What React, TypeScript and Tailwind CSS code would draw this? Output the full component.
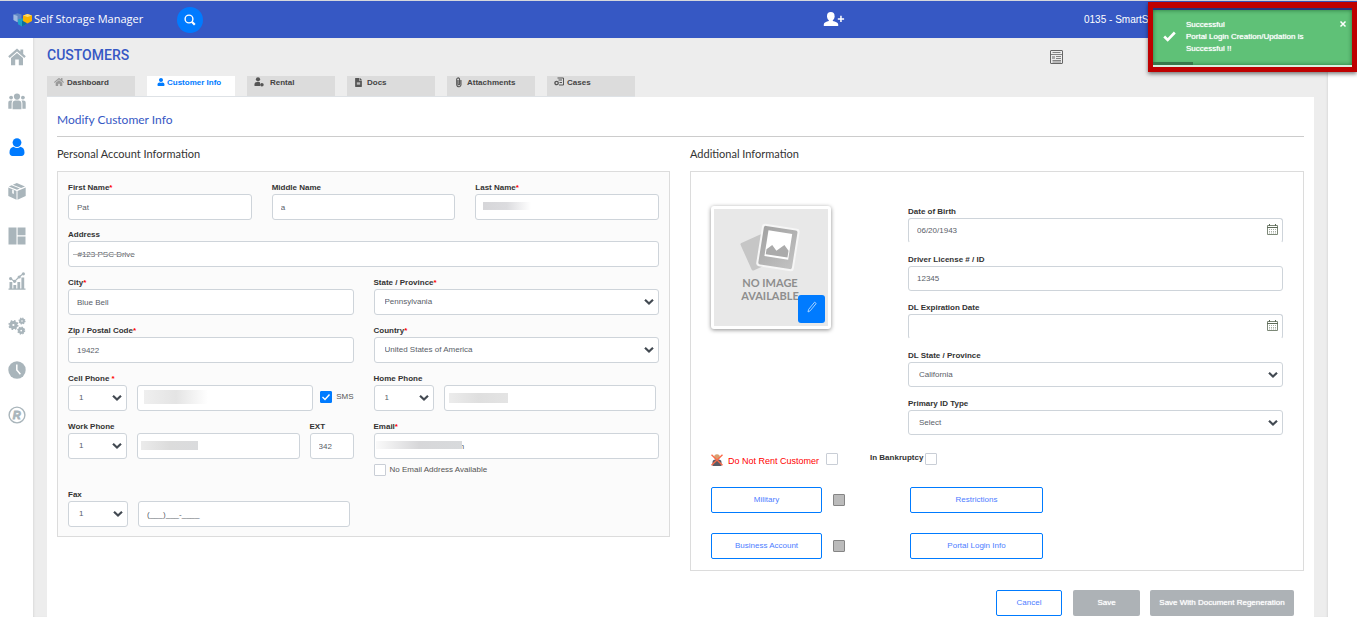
import type { ReactNode } from "react";
import { FaPaperclip, FaFileAlt, FaHome, FaUser } from "react-icons/fa";

const controlBase =
  "w-full min-w-0 rounded-[3px] border border-[#ced4da] bg-white text-[8px] leading-3 text-[#596068] outline-none";

function Star() {
  return <span className="text-[#ff0000]">*</span>;
}

function Field({
  id,
  label,
  required,
  className = "",
  children,
}: {
  id: string;
  label: string;
  required?: boolean;
  className?: string;
  children: ReactNode;
}) {
  return (
    <div className={"flex min-w-0 flex-col " + className}>
      <label htmlFor={id} className="block h-3.5 whitespace-nowrap text-[8px] leading-4 font-bold text-[#333]">
        {label}
        {required && <Star />}
      </label>
      {children}
    </div>
  );
}

function TextBox({
  id,
  value = "",
  label,
  className = "",
  size = "h-[26px]",
  mask,
}: {
  id: string;
  value?: string;
  label?: string;
  className?: string;
  size?: string;
  mask?: string;
}) {
  return (
    <div className="relative min-w-0 grow">
      <input
        id={id}
        type="text"
        aria-label={label}
        defaultValue={value}
        className={controlBase + " block " + size + " " + (className || "px-2")}
      />
      {mask && <span className={"pointer-events-none absolute " + mask} />}
    </div>
  );
}

function SelectBox({
  id,
  options,
  label,
  size = "h-[26px]",
  className = "grow",
}: {
  id: string;
  options: string[];
  label?: string;
  size?: string;
  className?: string;
}) {
  return (
    <div className={"relative min-w-0 " + className}>
      <select id={id} aria-label={label} className={controlBase + " block appearance-none pr-5 pl-2.5 " + size}>
        {options.map((o) => (
          <option key={o}>{o}</option>
        ))}
      </select>
      <svg
        viewBox="0 0 10 7"
        className="pointer-events-none absolute top-1/2 right-[5px] h-[7px] w-2.5 -translate-y-1/2"
        fill="none"
        stroke="#434a52"
        strokeWidth="2.2"
      >
        <path d="M1 1.2 L5 5 L9 1.2" />
      </svg>
    </div>
  );
}

function DateBox({ id, value = "" }: { id: string; value?: string }) {
  return (
    <div className="relative">
      <input
        id={id}
        type="text"
        defaultValue={value}
        className={controlBase + " block h-[25px] border-b-transparent pr-6 pl-2"}
      />
      <svg viewBox="0 0 11 11" className="absolute top-1.5 right-[5px] h-[11px] w-[11px]" fill="none">
        <path d="M0.5 1.5H10.5V10.5H0.5Z" stroke="#7c8877" />
        <path d="M0 3.5H11M2.5 0V2M8.5 0V2" stroke="#5d6a58" />
        <path d="M2 5.5H9M2 7.5H9M2 9H9" stroke="#a8b0a5" strokeDasharray="1 1" />
      </svg>
    </div>
  );
}

function Tick({ id, checked, label }: { id: string; checked?: boolean; label?: string }) {
  return (
    <span className="relative block h-3 w-3 shrink-0">
      <input
        id={id}
        type="checkbox"
        aria-label={label}
        defaultChecked={checked}
        className="peer block h-3 w-3 appearance-none rounded-[1px] border border-[#c9ced6] bg-white checked:border-[#007bff] checked:bg-[#007bff]"
      />
      <svg
        viewBox="0 0 12 12"
        className="pointer-events-none absolute inset-0 hidden h-3 w-3 peer-checked:block"
        fill="none"
        stroke="#fff"
        strokeWidth="1.4"
      >
        <path d="M2.5 6L5 8.5L9.5 3.5" />
      </svg>
    </span>
  );
}

function GreyTick({ id, label }: { id: string; label: string }) {
  return (
    <input
      id={id}
      type="checkbox"
      aria-label={label}
      className="block h-3 w-3 shrink-0 appearance-none rounded-[1px] border border-[#858585] bg-[#bbb]"
    />
  );
}

function Gear({ x, y, r }: { x: number; y: number; r: number }) {
  const teeth = (2 * Math.PI * r) / 16;
  return (
    <g fill="none" stroke="#a9b5bb">
      <circle cx={x} cy={y} r={r * 0.65} strokeWidth={r * 0.75} />
      <circle cx={x} cy={y} r={r} strokeWidth={r * 0.55} strokeDasharray={teeth + " " + teeth} />
    </g>
  );
}

const HomeIcon = (
  <svg viewBox="0 0 18 18" className="h-[18px] w-[18px]" fill="#a9b5bb">
    <path d="M9 0.6L0.2 8.2L1.7 9.9L9 3.6L16.3 9.9L17.8 8.2L15.2 5.9V1.6H12.4V3.6Z" />
    <path d="M9 5L3 10.1V17.3H7.2V11.6H10.8V17.3H15V10.1Z" />
  </svg>
);
const GroupIcon = (
  <svg viewBox="0 0 18 18" className="h-[18px] w-[18px]" fill="#a9b5bb">
    <circle cx="9" cy="3.6" r="3.1" />
    <circle cx="3.1" cy="4.6" r="1.9" />
    <circle cx="14.9" cy="4.6" r="1.9" />
    <path d="M4.6 16.2V10.8C4.6 8.8 5.8 7.6 7.4 7.6H10.6C12.2 7.6 13.4 8.8 13.4 10.8V16.2Z" />
    <path d="M0.3 15.8V9.8C0.3 8.2 1.2 7.4 2.5 7.4H4.5C3.8 8.4 3.6 9.4 3.6 10.6V15.8Z" />
    <path d="M17.7 15.8V9.8C17.7 8.2 16.8 7.4 15.5 7.4H13.5C14.2 8.4 14.4 9.4 14.4 10.6V15.8Z" />
  </svg>
);
const PersonIcon = (
  <svg viewBox="0 0 18 18" className="h-[18px] w-[18px]" fill="#007bff">
    <circle cx="9" cy="4.6" r="4.4" />
    <path d="M1.5 14.6C1.5 11.4 3 9.2 5.6 8.8C7.6 10.4 10.4 10.4 12.4 8.8C15 9.2 16.5 11.4 16.5 14.6C16.5 17 15.4 18 13.4 18H4.6C2.6 18 1.5 17 1.5 14.6Z" />
  </svg>
);
const BoxIcon = (
  <svg viewBox="0 0 18 18" className="h-[18px] w-[18px]" fill="#a9b5bb">
    <path d="M0.3 5.4L8.5 8.9V17.7L0.3 14Z" />
    <path d="M9.5 8.9L17.7 5.4V14L9.5 17.7Z" />
    <path d="M0.8 4.4L3.6 3.2L11.8 6.5L9 7.8Z" />
    <path d="M4.8 2.7L8.8 1L17 4.4L13.1 6Z" />
    <path d="M4.2 7.6L5.8 8.3V12L4.2 11.2Z" fill="#fff" />
  </svg>
);
const LayoutIcon = (
  <svg viewBox="0 0 18 18" className="h-[18px] w-[18px]" fill="#a9b5bb">
    <path d="M0.5 0.5H8.5V17.5H0.5ZM9.6 0.5H17.5V8.2H9.6ZM9.6 9.4H17.5V17.5H9.6Z" />
  </svg>
);
const ChartIcon = (
  <svg viewBox="0 0 18 18" className="h-[18px] w-[18px]" fill="#a9b5bb">
    <path d="M1.5 10H4.3V16.5H1.5ZM5.4 13H8.2V16.5H5.4ZM9.4 10H12.2V16.5H9.4ZM13.4 5.5H16.2V16.5H13.4ZM0.5 16.6H17.5V17.8H0.5Z" />
    <path d="M2.5 6.6L6.5 9.4L11.3 4.8L15.2 1.8" fill="none" stroke="#a9b5bb" strokeWidth="1.2" />
    <circle cx="2.6" cy="6.6" r="1.6" />
    <circle cx="6.6" cy="9.3" r="1.6" />
    <circle cx="11.2" cy="5" r="1.6" />
    <circle cx="15.4" cy="1.8" r="1.6" />
  </svg>
);
const GearsIcon = (
  <svg viewBox="0 0 18 18" className="h-[18px] w-[18px]">
    <Gear x={5.4} y={8} r={4} />
    <Gear x={14} y={4} r={2.8} />
    <Gear x={13.2} y={13.6} r={3.2} />
  </svg>
);
const ClockIcon = (
  <svg viewBox="0 0 18 18" className="h-[18px] w-[18px]">
    <circle cx="9" cy="9" r="8.7" fill="#a9b5bb" />
    <path d="M8.8 3.5V9L12.4 13.2" fill="none" stroke="#fff" strokeWidth="1.5" />
  </svg>
);
const RegisteredIcon = (
  <svg viewBox="0 0 18 18" className="h-[18px] w-[18px]">
    <circle cx="9" cy="9" r="7.9" fill="none" stroke="#a9b5bb" strokeWidth="1.4" />
    <text
      x="8.8"
      y="12.8"
      textAnchor="middle"
      fill="#a9b5bb"
      stroke="#a9b5bb"
      strokeWidth="0.8"
      className="text-[11px] font-bold italic"
    >
      R
    </text>
  </svg>
);

const sideLinks: { name: string; icon: ReactNode }[] = [
  { name: "Home", icon: HomeIcon },
  { name: "Leads", icon: GroupIcon },
  { name: "Customers", icon: PersonIcon },
  { name: "Units", icon: BoxIcon },
  { name: "Site layout", icon: LayoutIcon },
  { name: "Reports", icon: ChartIcon },
  { name: "Settings", icon: GearsIcon },
  { name: "History", icon: ClockIcon },
  { name: "Registered", icon: RegisteredIcon },
];

const RentalIcon = (
  <svg viewBox="0 0 10 10" className="h-2.5 w-2.5" fill="#555">
    <circle cx="4" cy="2.3" r="2.1" />
    <path d="M0.5 9V7.2C0.5 5.8 1.6 5 3 5H5C5.6 5 6 5.4 6 6V9Z" />
    <circle cx="7.9" cy="7.7" r="1.8" />
  </svg>
);
const CasesIcon = (
  <svg viewBox="0 0 10 10" className="h-2.5 w-2.5" fill="none" stroke="#555">
    <path d="M3.5 1H9.5V8H5M4.5 3H8M5.5 5.5H8" />
    <circle cx="2.6" cy="6" r="1.7" strokeWidth="1.3" />
  </svg>
);

const tabs: { name: string; icon: ReactNode; active?: boolean; iconWidth: string }[] = [
  { name: "Dashboard", icon: <FaHome className="h-2.5 w-2.5 text-[#999]" />, iconWidth: "w-[13px]" },
  { name: "Customer Info", icon: <FaUser className="h-2 w-2" />, active: true, iconWidth: "w-2.5" },
  { name: "Rental", icon: RentalIcon, iconWidth: "w-4" },
  { name: "Docs", icon: <FaFileAlt className="h-[9px] w-[9px] text-[#555]" />, iconWidth: "w-[13px]" },
  { name: "Attachments", icon: <FaPaperclip className="h-[9px] w-[9px] -rotate-45 text-[#555]" />, iconWidth: "w-[13px]" },
  { name: "Cases", icon: CasesIcon, iconWidth: "w-[13px]" },
];

const outlineBtn =
  "h-[26px] rounded-[2px] border border-[#007bff] bg-white pb-px text-[8px] leading-3 text-[#4d7dff]";
const greyBtn =
  "h-[26px] rounded-[2px] bg-[#adb2b6] pb-px text-[8px] leading-3 whitespace-nowrap text-white [text-shadow:0_0_1px_#fff]";

function Header() {
  return (
    <header className="flex h-[38px] items-center border-t border-[#d5d7dc] bg-[#3658c4] text-white">
      <div className="flex w-[177px] items-center pl-[13px]">
        <svg viewBox="0 0 20 14" className="h-3.5 w-5 shrink-0">
          <path d="M0.5 1.5L4.5 0.3L8.5 1.5V7L4.5 9.3L0.5 7Z" fill="#5f86c4" />
          <path d="M0.5 1.5L4.5 2.9V9.3L0.5 7Z" fill="#9db8e0" />
          <path d="M5 6.5L9 5.3L13 6.5V11.3L9 13.6L5 11.3Z" fill="#1fa0c8" />
          <path d="M9 7.9L13 6.5V11.3L9 13.6Z" fill="#0b6f9d" />
          <path d="M10 2.5L14.5 1L19 2.5V8L14.5 10.5L10 8Z" fill="#f8b400" />
          <path d="M10 2.5L14.5 1L19 2.5L14.5 4Z" fill="#ffd968" />
        </svg>
        <span className="ml-px font-['Open_Sans',sans-serif] text-[11px] whitespace-nowrap">Self Storage Manager</span>
      </div>
      <button
        type="button"
        aria-label="Search"
        className="flex h-[26px] w-[26px] items-center justify-center rounded-full bg-[#007bff]"
      >
        <svg viewBox="0 0 12 12" className="h-3 w-3" fill="none" stroke="#fff">
          <circle cx="5" cy="5" r="3.9" strokeWidth="1.4" />
          <path d="M7.8 7.8L10.8 10.8" strokeWidth="2.2" />
        </svg>
      </button>
      <div className="flex grow justify-end pr-[239px] pb-0.5">
        <button type="button" aria-label="Add customer">
          <svg viewBox="0 0 22 14" className="h-3.5 w-[22px]" fill="#fff">
            <ellipse cx="7.8" cy="4.2" rx="3.8" ry="4.2" />
            <path d="M5.8 7H9.8V9C12.4 9.8 15 10.4 15.2 12.2V14H0.8V12.2C1 10.4 3.4 9.8 5.8 9Z" />
            <path d="M17.2 3.8H18.7V6.2H21.1V7.7H18.7V10.1H17.2V7.7H14.8V6.2H17.2Z" />
          </svg>
        </button>
      </div>
      <span className="w-[273px] overflow-hidden text-[10px] whitespace-nowrap">0135 - SmartStorage</span>
    </header>
  );
}

function Toast() {
  return (
    <div
      role="status"
      className="absolute top-0.5 right-0 flex h-[70px] w-[209px] flex-col border-[5px] border-t-[6px] border-[#be0000] bg-[#d9f0df] shadow-[0_2px_4px_rgba(0,0,0,0.5)]"
    >
      <div className="h-0.5 shrink-0 bg-[#22357f]" />
      <div className="relative flex h-[55px] items-center bg-[#5fc177] pb-0.5 shadow-[inset_0_0_4px_rgba(0,60,20,0.6)]">
        <svg viewBox="0 0 13 11" className="ml-2.5 h-[11px] w-[13px]" fill="none" stroke="#fff" strokeWidth="2.6">
          <path d="M1.2 5.5L4.7 9L11.8 1.5" />
        </svg>
        <p className="ml-2.5 w-[130px] text-[8px] leading-3 text-white [text-shadow:0_0_1px_#fff]">
          Successful
          <br />
          Portal Login Creation/Updation is
          <br />
          Successful !!
        </p>
        <button type="button" aria-label="Close" className="absolute top-2.5 right-[5px] h-2 w-2">
          <svg viewBox="0 0 8 8" className="h-2 w-2" stroke="#fff" strokeWidth="1.5">
            <path d="M1.5 1.5L6.5 6.5M6.5 1.5L1.5 6.5" />
          </svg>
        </button>
        <div className="absolute bottom-0 left-0 h-[3px] w-1/5 bg-[#38784a]" />
      </div>
    </div>
  );
}

function Photo() {
  return (
    <div className="relative h-[123px] w-[120px] rounded-[3px] border-[3px] border-white bg-[#e8e8e8] shadow-[0_1px_4px_rgba(0,0,0,0.45)]">
      <svg viewBox="0 0 114 117" className="block h-full w-full">
        <defs>
          <linearGradient id="frame" x1="0" y1="0" x2="1" y2="1">
            <stop offset="0" stopColor="#a2a2a2" />
            <stop offset="1" stopColor="#c2c2c2" />
          </linearGradient>
        </defs>
        <rect x="31" y="28" width="26" height="30" rx="1.5" transform="rotate(-24 44 43)" fill="#c6c6c6" />
        <g transform="rotate(9 64 38)">
          <rect x="45" y="17" width="38" height="43" rx="3" fill="#f6f6f6" />
          <rect x="47" y="19" width="34" height="39" rx="2" fill="url(#frame)" />
          <rect x="52" y="23" width="24" height="26" fill="#fff" />
          <path d="M53 47V42L58 37L63 42L70 35L75 40V47Z" fill="#ababab" />
        </g>
        <g fill="#8e8e8e" textAnchor="middle" className="font-['Lato',sans-serif] text-[11px] font-bold">
          <text x="56" y="78">NO IMAGE</text>
          <text x="56" y="91">AVAILABLE</text>
        </g>
      </svg>
      <button
        type="button"
        aria-label="Edit photo"
        className="absolute right-[3px] bottom-[3px] flex h-7 w-[27px] items-center justify-center rounded-[3px] bg-[#007bff]"
      >
        <svg viewBox="0 0 10 12" className="mb-1 h-3 w-2.5" fill="none" stroke="#b8dbff" strokeWidth="0.9">
          <path d="M1 11L1.6 8.4L7.6 1.2L9.2 2.5L3.2 9.8Z" />
        </svg>
      </button>
    </div>
  );
}

function PersonalInfo() {
  return (
    <section className="min-w-0">
      <h3 className="font-['Lato',sans-serif] text-[11px] leading-4 text-[#333]">Personal Account Information</h3>
      <div className="mt-[9px] border border-[#dcdcdc] bg-[#fbfbfb] px-2.5 pt-2 pb-[9px]">
        <div className="mb-[7px] grid grid-cols-3 gap-5">
          <Field id="first" label="First Name" required>
            <TextBox id="first" value="Pat" />
          </Field>
          <Field id="middle" label="Middle Name">
            <TextBox id="middle" value="a" />
          </Field>
          <Field id="last" label="Last Name" required>
            <TextBox
              id="last"
              mask="top-2 left-2 h-2 w-12 bg-linear-to-r from-[#d6d6d9] via-[#dcdcdf] to-transparent"
            />
          </Field>
        </div>
        <Field id="address" label="Address" className="mb-2">
          <TextBox id="address" value="  #123 PSC Drive" className="px-1 line-through decoration-[#b5b5b5]" />
        </Field>
        <div className="mb-2 grid grid-cols-2 gap-x-5 gap-y-2">
          <Field id="city" label="City" required>
            <TextBox id="city" value="Blue Bell" />
          </Field>
          <Field id="state" label="State / Province" required>
            <SelectBox id="state" options={["Pennsylvania", "California"]} />
          </Field>
          <Field id="zip" label="Zip / Postal Code" required>
            <TextBox id="zip" value="19422" />
          </Field>
          <Field id="country" label="Country" required>
            <SelectBox id="country" options={["United States of America", "Canada"]} />
          </Field>
          <Field id="cell" label="Cell Phone " required>
            <div className="flex items-center">
              <SelectBox id="cell-code" label="Cell country code" options={["1", "44"]} className="mr-2.5 w-[59px]" />
              <TextBox
                id="cell"
                mask="top-[5px] left-[7px] h-3.5 w-16 bg-linear-to-r from-[#efefef] via-[#e4e4e4] to-transparent"
              />
              <div className="ml-[7px] flex items-center gap-1 pb-0.5">
                <Tick id="sms" checked />
                <label htmlFor="sms" className="text-[8px] leading-3 text-[#555]">
                  SMS
                </label>
              </div>
            </div>
          </Field>
          <Field id="home" label="Home Phone">
            <div className="flex pr-[3px]">
              <SelectBox id="home-code" label="Home country code" options={["1", "44"]} className="mr-2.5 w-[60px]" />
              <TextBox
                id="home"
                mask="top-2 left-[5px] h-2.5 w-[59px] bg-linear-to-r from-[#ececec] via-[#dfdfdf] to-[#e4e4e4]"
              />
            </div>
          </Field>
        </div>
        <div className="mb-[11px] grid grid-cols-2 gap-5">
          <div className="flex min-w-0 gap-2.5">
            <Field id="work" label="Work Phone" className="grow">
              <div className="flex">
                <SelectBox id="work-code" label="Work country code" options={["1", "44"]} className="mr-2.5 w-[59px]" />
                <TextBox
                  id="work"
                  mask="top-2 left-1 h-[9px] w-[57px] bg-linear-to-r from-[#ebebeb] via-[#dcdcdc] to-[#dadbdd]"
                />
              </div>
            </Field>
            <Field id="ext" label="EXT" className="w-11 shrink-0">
              <TextBox id="ext" value="342" />
            </Field>
          </div>
          <div className="min-w-0">
            <Field id="email" label="Email" required>
              <TextBox
                id="email"
                value="m"
                className="pl-[83px]"
                mask="top-2 left-0.5 h-2 w-[86px] bg-linear-to-r from-[#fafafa] via-[#d7d7d9] to-[#d8dadc]"
              />
            </Field>
            <div className="mt-[5px] flex h-3 items-center gap-1">
              <Tick id="no-email" />
              <label htmlFor="no-email" className="text-[8px] leading-3 text-[#555]">
                No Email Address Available
              </label>
            </div>
          </div>
        </div>
        <div className="grid grid-cols-2 gap-5">
          <Field id="fax" label="Fax">
            <div className="flex pr-1">
              <SelectBox id="fax-code" label="Fax country code" options={["1", "44"]} className="mr-2.5 w-[60px]" />
              <TextBox id="fax" value="(___)___-____" />
            </div>
          </Field>
        </div>
      </div>
    </section>
  );
}

function AdditionalInfo() {
  return (
    <section className="min-w-0">
      <h3 className="font-['Lato',sans-serif] text-[11px] leading-4 text-[#333]">Additional Information</h3>
      <div className="mt-[9px] border border-[#dcdcdc] pr-5 pb-[11px] pl-5">
        <div className="flex justify-between gap-[77px] pt-8">
          <div className="shrink-0 pt-0.5">
            <Photo />
          </div>
          <div className="flex grow flex-col gap-[9px]">
            <Field id="dob" label="Date of Birth">
              <DateBox id="dob" value="06/20/1943" />
            </Field>
            <Field id="dl" label="Driver License # / ID">
              <TextBox id="dl" value="12345" size="h-[25px]" />
            </Field>
            <Field id="dlexp" label="DL Expiration Date">
              <DateBox id="dlexp" />
            </Field>
            <Field id="dlstate" label="DL State / Province">
              <SelectBox id="dlstate" options={["California", "Pennsylvania"]} size="h-[25px]" />
            </Field>
            <Field id="idtype" label="Primary ID Type">
              <SelectBox id="idtype" options={["Select", "Passport"]} size="h-[25px]" />
            </Field>
          </div>
        </div>
        <div className="mt-4 flex items-center">
          <svg viewBox="0 0 12 12" className="mt-0.5 h-3 w-3 shrink-0">
            <circle cx="6" cy="3" r="2.8" fill="#d8a070" />
            <path d="M1.5 12V8C1.5 6 3 5.2 6 5.2S10.5 6 10.5 8V12Z" fill="#5a5a64" />
            <path d="M0.5 0.8L11.5 11.2M11.5 0.8L0.5 11.2" stroke="#fa6a4a" strokeWidth="1.4" />
          </svg>
          <label htmlFor="dnr" className="ml-[5px] w-[98px] pt-1 text-[9px] leading-3 whitespace-nowrap text-[#ff0000]">
            Do Not Rent Customer
          </label>
          <Tick id="dnr" />
          <label
            htmlFor="bankruptcy"
            className="ml-8 w-[55px] pb-[3px] text-[8px] leading-3 font-bold whitespace-nowrap text-[#333]"
          >
            In Bankruptcy
          </label>
          <Tick id="bankruptcy" />
        </div>
        <div className="mt-5 grid grid-cols-[111px_88px_133px] items-center gap-y-5">
          <button type="button" className={outlineBtn}>
            Military
          </button>
          <span className="pl-[11px]">
            <GreyTick id="military" label="Military" />
          </span>
          <button type="button" className={outlineBtn}>
            Restrictions
          </button>
          <button type="button" className={outlineBtn}>
            Business Account
          </button>
          <span className="pl-[11px]">
            <GreyTick id="business" label="Business account" />
          </span>
          <button type="button" className={outlineBtn}>
            Portal Login Info
          </button>
        </div>
      </div>
    </section>
  );
}

export default function App() {
  return (
    <div className="relative flex min-h-screen flex-col bg-white font-['Liberation_Sans',Arial,sans-serif]">
      <Header />
      <Toast />
      <div className="flex grow">
        <nav aria-label="Main" className="w-[33px] shrink-0 pt-2.5">
          <div className="flex h-[376px] flex-col items-center justify-between">
            {sideLinks.map((l) => (
              <a key={l.name} href="#" aria-label={l.name} title={l.name}>
                {l.icon}
              </a>
            ))}
          </div>
        </nav>
        <main className="min-w-0 grow bg-[#ededed] px-3.5 shadow-[inset_2px_0_2px_-1px_rgba(0,0,0,0.08),inset_-2px_0_2px_-1px_rgba(0,0,0,0.08)]">
          <div className="flex h-[38px] items-start justify-between pt-[7px]">
            <h1 className="font-['Roboto',sans-serif] text-[14px] leading-5 font-medium text-[#3658c4]">CUSTOMERS</h1>
            <button type="button" aria-label="Notes" className="mt-[5px] mr-[251px]">
              <svg viewBox="0 0 13 14" className="h-3.5 w-[13px]" fill="none" stroke="#777">
                <rect x="0.5" y="0.5" width="12" height="13" rx="0.5" stroke="#666" />
                <path d="M2.5 2.5H10.5M1 4.5H12M6 6.5H11M6 8.5H11M2.5 10.5H11M2.5 12H11" strokeWidth="0.9" />
                <path d="M2 7.5H5" strokeWidth="3" stroke="#aaa" />
              </svg>
            </button>
          </div>
          <div className="flex">
            <div role="tablist" className="flex h-[21px] gap-3 border-b border-[#dee2e6]">
              {tabs.map((t) => (
                <button
                  key={t.name}
                  role="tab"
                  type="button"
                  aria-selected={!!t.active}
                  className={
                    "flex h-5 w-[88px] items-start text-[8px] leading-[13px] font-bold whitespace-nowrap " +
                    (t.active ? "bg-white pl-2.5 text-[#007bff]" : "bg-[#dcdcdc] pl-[7px] text-[#444]")
                  }
                >
                  <span className={"flex h-3 shrink-0 items-center " + t.iconWidth}>{t.icon}</span>
                  {t.name}
                </button>
              ))}
            </div>
          </div>
          <div className="bg-white px-2.5">
            <h2 className="border-b border-[#ccc] pt-3.5 pb-[7px] font-['Lato',sans-serif] text-[12px] leading-[18px] text-[#3658c4]">
              Modify Customer Info
            </h2>
            <div className="grid grid-cols-[613fr_614fr] items-start gap-5 pt-[9px]">
              <PersonalInfo />
              <AdditionalInfo />
            </div>
            <div className="mt-[19px] flex justify-end pr-2.5 pb-px">
              <button type="button" className={outlineBtn + " mr-[11px] w-[66px]"}>
                Cancel
              </button>
              <button type="button" className={greyBtn + " mr-2.5 w-[67px]"}>
                Save
              </button>
              <button type="button" className={greyBtn + " w-36"}>
                Save With Document Regeneration
              </button>
            </div>
          </div>
        </main>
        <div className="w-[29px] shrink-0" />
      </div>
    </div>
  );
}
